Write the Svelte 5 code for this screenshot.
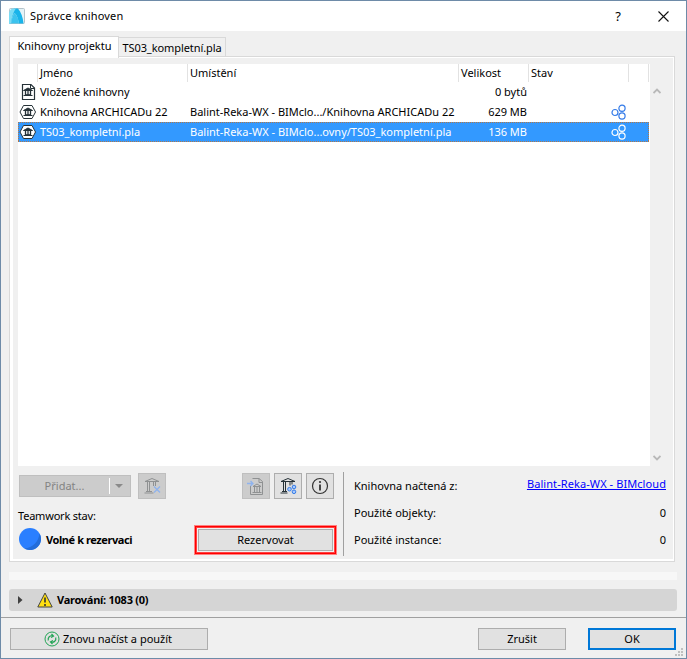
<script>
    let tabs = ['Knihovny projektu', 'TS03_kompletní.pla'];
    let activeTab = 0;
    let selected = 2;

    let libraries = [
        { icon: 'file', name: 'Vložené knihovny', location: '', size: '0 bytů', shared: false },
        { icon: 'hex', name: 'Knihovna ARCHICADu 22', location: 'Balint-Reka-WX - BIMclo.../Knihovna ARCHICADu 22', size: '629 MB', shared: true },
        { icon: 'hex', name: 'TS03_kompletní.pla', location: 'Balint-Reka-WX - BIMclo...ovny/TS03_kompletní.pla', size: '136 MB', shared: true }
    ];
</script>

<div class="window">
    <header class="titlebar">
        <svg class="logo" width="16" height="16" viewBox="0 0 16 16">
            <rect x="0.5" y="0.5" width="15" height="15" rx="1" fill="#e4f3f8" stroke="#b4c3ca" />
            <path d="M0 15.5C1 8 3 2 5 0.500h4C12 4 14 9 14.500 15.500H10C9 11 8 7 5.500 5C3.500 8 2.500 11 2 15.500Z" fill="#19b4ea" />
            <path d="M0 15.500V5C1 2 2 1 4 0.500h3C5 3 3 8 2 15.500Z" fill="#7bdcf5" />
            <path d="M5.500 5C8 7 9.500 11 10 15.500H2C2.500 11 4 7 5.500 5Z" fill="#3cc3ee" />
        </svg>
        <h1>Správce knihoven</h1>
        <span class="help">?</span>
        <svg class="close" width="11" height="11" viewBox="0 0 11 11">
            <path d="M0.500 0.500l10 10M10.500 0.500l-10 10" stroke="#111" stroke-width="1.100" />
        </svg>
    </header>

    <nav class="tabs">
        {#each tabs as tab, i}
        <button class="tab" class:active={i === activeTab} on:click={() => activeTab = i}>{tab}</button>
        {/each}
    </nav>

    <main class="panel">
        <div class="inner">
            <div class="list-area">
                <div class="list">
                    <div class="row head">
                        <span></span>
                        <span>Jméno</span>
                        <span>Umístění</span>
                        <span>Velikost</span>
                        <span>Stav</span>
                        <span></span>
                    </div>
                    {#each libraries as lib, i}
                    <!-- svelte-ignore a11y_click_events_have_key_events, a11y_no_static_element_interactions -->
                    <div class="row" class:selected={i === selected} on:click={() => selected = i}>
                        <span class="lib-icon">
                            <svg width="19" height="18" viewBox="0 0 19 18">
                                {#if lib.icon === 'file'}
                                <path d="M4.500 1.500h8.500l3.500 3.500v11.500h-12z" fill="#fff" stroke="#263238" stroke-width="1.200" />
                                <path d="M12.500 1.500v4h4" fill="none" stroke="#263238" />
                                {:else}
                                <path d="M5.500 2.500h8.500L17.500 9L14 15.500H5.500L2 9Z" fill="#fff" stroke="#263238" />
                                {/if}
                                <path d="M5.500 7.500L10 5L14.500 7.500ZM5.500 12.500h9M7 11.700h6" fill="#263238" stroke="#263238" />
                                <path d="M7.500 8v4.500M10 8v4.500M12.500 8v4.500" stroke="#263238" stroke-width="1.300" />
                            </svg>
                        </span>
                        <span class="name">{lib.name}</span>
                        <span class="location">{lib.location}</span>
                        <span class="size">{lib.size}</span>
                        <span class="state">
                            {#if lib.shared}
                            <svg width="16" height="16" viewBox="0 0 16 16" fill="none" stroke="currentColor" stroke-width="1.200">
                                <circle cx="4" cy="8.500" r="3" />
                                <circle cx="11" cy="4.300" r="3.100" />
                                <circle cx="11" cy="12" r="3.100" />
                            </svg>
                            {/if}
                        </span>
                        <span></span>
                    </div>
                    {/each}
                </div>
                <div class="scroll">
                    <svg width="8" height="6" viewBox="0 0 8 6"><path d="M0.500 5L4 1.500L7.500 5" /></svg>
                    <svg width="8" height="6" viewBox="0 0 8 6"><path d="M0.500 1L4 4.500L7.500 1" /></svg>
                </div>
            </div>

            <div class="bottom">
                <section class="actions">
                    <div class="toolbar">
                        <button class="add" disabled>
                            <span class="add-label">Přidat...</span>
                            <span class="add-arrow"></span>
                        </button>
                        <button class="tool delete" disabled aria-label="Odstranit">
                            <svg width="18" height="18" viewBox="0 0 18 18">
                                <path d="M2 4.500L9 1.500L16 4.500Z" fill="none" stroke="#8f9192" />
                                <path d="M4.500 5v9M6.500 5v9M12.500 5v4M10.500 5v4M3 14.500h6M1.500 16h9" fill="none" stroke="#8f9192" />
                                <path d="M11 9.500l6 6M17 9.500l-6 6" stroke="#8fb3ee" stroke-width="1.300" />
                            </svg>
                        </button>
                        <button class="tool embed" disabled aria-label="Vložit">
                            <svg width="18" height="18" viewBox="0 0 18 18">
                                <path d="M3.500 9v8.500h12V4.500L12 1.500H5.500M12 1.500v4h3.500" fill="none" stroke="#8f9192" />
                                <path d="M6 9.500l4-2.500l4 2.500ZM5.500 15.500h9M7.500 10v5M10 10v5M12.500 10v5" fill="none" stroke="#8f9192" />
                                <path d="M0 6.500h5.500M3.500 4l2.500 2.500L3.500 9" fill="none" stroke="#8fb3ee" stroke-width="1.300" />
                            </svg>
                        </button>
                        <button class="tool" aria-label="Knihovny BIMcloud">
                            <svg width="18" height="18" viewBox="0 0 18 18">
                                <path d="M2 4.500L9 1.500L16 4.500ZM4.500 5v9M6.500 5v9M11 5v3.500M13 5v2.500M3 14.500h5M1.500 16h7" fill="none" stroke="#263238" />
                                <g fill="#a8cbff" stroke="#347be8">
                                    <circle cx="10.500" cy="12.200" r="1.800" />
                                    <circle cx="15" cy="10" r="1.800" />
                                    <circle cx="15" cy="14.800" r="1.800" />
                                </g>
                            </svg>
                        </button>
                        <button class="tool" aria-label="Informace">
                            <svg width="18" height="18" viewBox="0 0 18 18">
                                <circle cx="9" cy="9" r="7.500" fill="none" stroke="#333" stroke-width="1.200" />
                                <path d="M9 7.500v6" stroke="#333" stroke-width="1.800" />
                                <circle cx="9" cy="5" r="1.100" fill="#333" />
                            </svg>
                        </button>
                    </div>
                    <p class="tw-label">Teamwork stav:</p>
                    <div class="teamwork">
                        <svg width="22" height="22" viewBox="0 0 22 22">
                            <circle cx="11" cy="11" r="11" fill="#2a7fff" />
                            <path d="M20.500 5.450A11 11 0 0 1 5.450 20.500C14 19.500 19.500 14 20.500 5.450Z" fill="#226cd9" />
                        </svg>
                        <b>Volné k rezervaci</b>
                        <div class="highlight"><button class="btn reserve">Rezervovat</button></div>
                    </div>
                </section>
                <dl class="info">
                    <dt>Knihovna načtená z:</dt>
                    <dd><span class="link">Balint-Reka-WX - BIMcloud</span></dd>
                    <dt>Použité objekty:</dt>
                    <dd>0</dd>
                    <dt>Použité instance:</dt>
                    <dd>0</dd>
                </dl>
            </div>
        </div>
    </main>

    <div class="strip"></div>

    <div class="warnings">
        <svg width="5" height="8" viewBox="0 0 5 8"><path d="M0 0L4.500 4L0 8Z" fill="#404040" /></svg>
        <svg class="warn" width="16" height="16" viewBox="0 0 16 16">
            <path d="M8 1L15.200 15H0.800Z" fill="#ffdf12" stroke="#444" stroke-linejoin="round" />
            <path d="M8 5.500v5M8 12v2" stroke="#333" stroke-width="1.600" />
        </svg>
        <b>Varování: 1083 (0)</b>
    </div>

    <footer>
        <button class="btn reload">
            <svg width="16" height="16" viewBox="0 0 16 16" fill="none" stroke="#22a455">
                <circle cx="8" cy="8" r="7" />
                <path d="M4.300 9.500C3.500 6.500 6 4 9 5M7.500 3L9.500 5.200L7 6.500M11.700 6.500C12.500 9.500 10 12 7 11M8.500 13L6.500 10.800L9 9.500" stroke-width="1.200" />
            </svg>
            <span>Znovu načíst a použít</span>
        </button>
        <button class="btn cancel">Zrušit</button>
        <button class="btn ok">OK</button>
        <svg class="grip" width="9" height="9" viewBox="0 0 9 9" fill="#bfbfbf">
            <path d="M6 0h2v2h-2zM3 3h2v2h-2zM6 3h2v2h-2zM0 6h2v2h-2zM3 6h2v2h-2zM6 6h2v2h-2z" />
        </svg>
    </footer>
</div>

<style>
    .window {
        position: relative;
        box-sizing: border-box;
        display: flex;
        flex-direction: column;
        width: 687px;
        height: 659px;
        border: 1px solid #6e8ba8;
        background: #f0f0f0;
        color: #000;
        font-family: "Noto Sans", "Open Sans", sans-serif;
        font-size: 11px;
        line-height: 14px;
        overflow: hidden;
    }
    .window * {
        box-sizing: border-box;
    }
    button {
        padding: 0;
        margin: 0;
        font: inherit;
        color: inherit;
    }
    svg {
        display: block;
        flex: none;
    }
    .titlebar {
        display: flex;
        align-items: center;
        height: 30px;
        padding: 0 17px 0 8px;
        background: #fff;
    }
    h1 {
        flex: 1;
        margin: 0 0 0 5px;
        font-size: 11px;
        font-weight: 400;
        letter-spacing: 0.18px;
    }
    .help {
        margin-right: 37px;
        font-size: 13px;
    }
    .tabs {
        display: flex;
        align-items: flex-end;
        height: 26px;
        padding-left: 8px;
    }
    .tab {
        width: 107px;
        height: 20px;
        border: 1px solid #d9d9d9;
        border-width: 1px 1px 0 0;
        background: #f0f0f0;
        letter-spacing: -0.08px;
        white-space: nowrap;
    }
    .tab.active {
        position: relative;
        z-index: 1;
        width: 110px;
        height: 22px;
        border-left-width: 1px;
        margin-bottom: -1px;
        padding: 0 0 3px 1px;
        background: #fff;
        letter-spacing: 0;
    }
    .panel {
        height: 506px;
        width: 666px;
        margin-left: 8px;
        margin-top: -1px;
        padding: 1px 1px 2px 3px;
        border: 1px solid #d9d9d9;
        background: #fff;
    }
    .inner {
        height: 501px;
        padding: 6px 0 0 5px;
        background: #f0f0f0;
    }
    .list-area {
        display: flex;
        height: 402px;
    }
    .list {
        width: 632px;
        background: #fff;
    }
    .row {
        display: grid;
        grid-template-columns: 20px 150px 271px 70px 100px 20px;
        align-items: center;
        width: 631px;
        height: 20px;
        white-space: nowrap;
    }
    .head {
        height: 18px;
    }
    .head span {
        height: 18px;
        padding-left: 2px;
        border-right: 1px solid #e2e2e2;
        line-height: 18px;
    }
    .selected {
        background:
            repeating-linear-gradient(90deg, #b07848 0 1px, #3399ff 1px 2px) top / 100% 1px no-repeat,
            repeating-linear-gradient(90deg, #b07848 0 1px, #3399ff 1px 2px) bottom / 100% 1px no-repeat,
            repeating-linear-gradient(#b07848 0 1px, #3399ff 1px 2px) left / 1px 100% no-repeat,
            repeating-linear-gradient(#b07848 0 1px, #3399ff 1px 2px) right / 1px 100% no-repeat,
            #3399ff;
        color: #fff;
    }
    .name, .location {
        padding-left: 2px;
    }
    .name {
        letter-spacing: -0.03px;
    }
    .size {
        padding-right: 2px;
        text-align: right;
    }
    .state {
        display: flex;
        justify-content: flex-end;
        padding-right: 2px;
        color: #347be8;
    }
    .selected .state {
        color: #fff;
    }
    .scroll {
        display: flex;
        flex-direction: column;
        justify-content: space-between;
        padding: 24px 0 5px 3px;
    }
    .scroll path {
        fill: none;
        stroke: #b8b8b8;
        stroke-width: 1.8;
    }
    .bottom {
        display: flex;
        height: 93px;
        padding-top: 6px;
    }
    .actions {
        flex: none;
        width: 326px;
        height: 84px;
        border-right: 1px solid #a0a0a0;
    }
    .toolbar {
        display: flex;
        align-items: center;
        gap: 4px;
        height: 28px;
        padding-left: 1px;
    }
    .add {
        display: flex;
        align-items: center;
        width: 112px;
        height: 22px;
        border: 1px solid #bfbfbf;
        background: #ccc;
        color: #838383;
    }
    .add-label {
        width: 90px;
        height: 16px;
        border-right: 1px solid #fff;
        line-height: 15px;
    }
    .add-arrow {
        margin-left: 5px;
        border: 4px solid transparent;
        border-top-color: #8a8a8a;
        border-bottom: 0;
    }
    .tool {
        display: flex;
        align-items: center;
        justify-content: center;
        width: 28px;
        height: 26px;
        border: 1px solid #adadad;
        background: #e1e1e1;
    }
    .tool:disabled {
        border-color: #bfbfbf;
        background: #ccc;
    }
    .delete {
        margin-left: 3px;
    }
    .embed {
        margin-left: 72px;
    }
    .tw-label {
        margin: 9px 0 0;
        letter-spacing: -0.2px;
    }
    .teamwork {
        display: flex;
        align-items: center;
        height: 30px;
        padding-left: 1px;
        margin-top: 2px;
    }
    .teamwork svg {
        margin-top: -2px;
    }
    b {
        letter-spacing: -0.26px;
        white-space: nowrap;
    }
    .teamwork b {
        width: 149px;
        margin-left: 5px;
        letter-spacing: -0.42px;
    }
    .highlight {
        width: 141px;
        height: 28px;
        padding: 2px;
        border: 1px solid #ff0000;
        box-shadow: 0 0 0 1px #ff8080, inset 0 0 0 1px #ff4040;
    }
    .btn {
        border: 1px solid #adadad;
        background: #e1e1e1;
    }
    .reserve {
        display: block;
        width: 135px;
        height: 22px;
    }
    .info {
        display: grid;
        grid-template-columns: 130px 1fr;
        grid-auto-rows: 27px;
        width: 312px;
        margin: 7px 0 0 10px;
    }
    dd {
        margin: 0;
        text-align: right;
    }
    .link {
        position: relative;
        top: -2px;
        color: #0000ff;
        letter-spacing: 0.08px;
        text-decoration: underline;
        white-space: nowrap;
    }
    .strip {
        height: 8px;
        margin: 10px 9px 0 8px;
        background: #f7f7f7;
    }
    .warnings {
        display: flex;
        align-items: center;
        height: 22px;
        margin: 9px 9px 0 8px;
        padding-left: 9px;
        border-radius: 3px;
        background: #d5d5d5;
    }
    .warn {
        margin: 0 4px 0 14px;
    }
    footer {
        display: flex;
        height: 40px;
        margin-top: 6px;
        padding: 10px 10px 0 9px;
        border-top: 1px solid #a0a0a0;
    }
    .reload {
        display: flex;
        align-items: center;
        justify-content: center;
        gap: 3px;
        width: 198px;
        height: 22px;
        margin-right: auto;
        padding-right: 2px;
    }
    .cancel {
        width: 88px;
        height: 22px;
        margin-right: 22px;
    }
    .ok {
        width: 88px;
        height: 22px;
        border: 2px solid #0078d7;
    }
    .grip {
        position: absolute;
        right: 2px;
        bottom: 1px;
    }
</style>
